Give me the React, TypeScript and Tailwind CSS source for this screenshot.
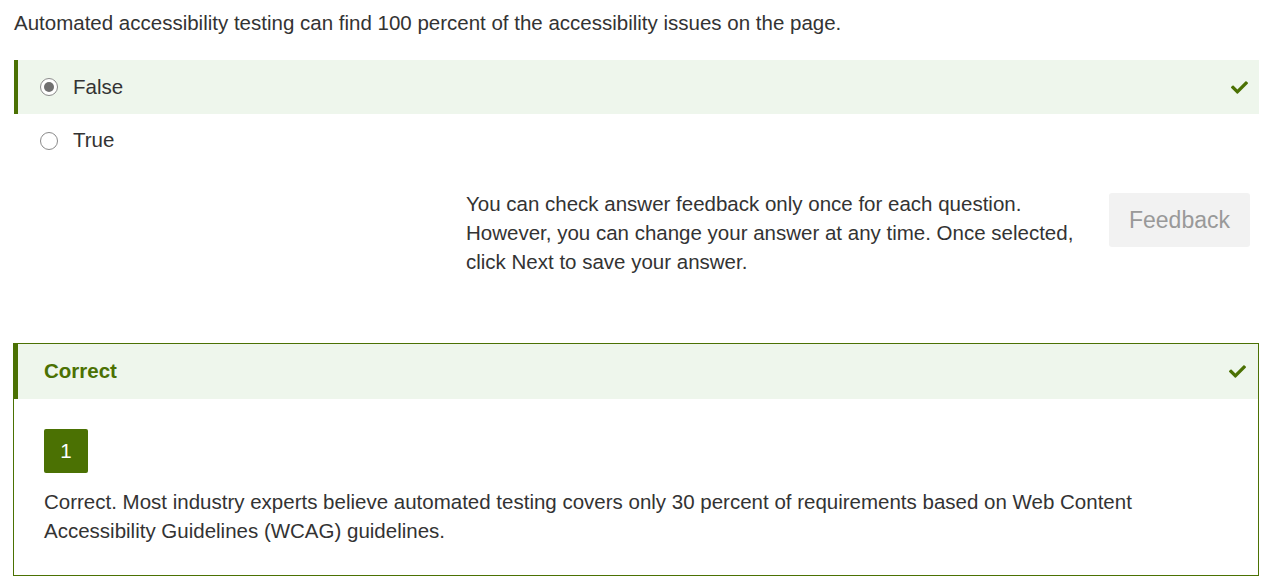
import type { ReactNode } from 'react';

const GREEN = 'text-[#4b7103]';

function Check() {
  return (
    <svg viewBox="0 0 512 512" className="h-[17px] w-[17px] fill-[#4b7103]" aria-hidden>
      <path d="M173.9 439.4l-166.4-166.4c-10-10-10-26.2 0-36.2l36.2-36.2c10-10 26.2-10 36.2 0L192 312.7 432.1 72.6c10-10 26.2-10 36.2 0l36.2 36.2c10 10 10 26.2 0 36.2l-294.4 294.4c-10 10-26.2 10-36.2 0z" />
    </svg>
  );
}

function Radio({ checked }: { checked?: boolean }) {
  return (
    <span className="flex h-[18px] w-[18px] items-center justify-center rounded-full border-[1.5px] border-[#8a8a8a] bg-white">
      {checked && <span className="h-[10px] w-[10px] rounded-full bg-[#707070]" />}
    </span>
  );
}

function Option({ label, checked, correct, children }: { label: string; checked?: boolean; correct?: boolean; children?: ReactNode }) {
  return (
    <div
      className={
        correct
          ? 'flex h-[54px] items-center border-l-4 border-[#4b7103] bg-[#eef6ec] pl-[22px] pr-[11px]'
          : 'flex h-[53px] items-center border-l-4 border-transparent pl-[22px] pr-[11px]'
      }
    >
      <Radio checked={checked} />
      <span className="ml-[15px] flex-1 text-[20.5px] text-[#333]">{label}</span>
      {children}
    </div>
  );
}

export default function App() {
  return (
    <div className="min-h-screen bg-white pl-[14px] pr-[18px] pt-[10px] font-['Liberation_Sans',Arial,sans-serif] text-[#333]">
      <p className="text-[20.5px] leading-[26px]">
        Automated accessibility testing can find 100 percent of the accessibility issues on the page.
      </p>

      <div className="mt-[24px]">
        <Option label="False" checked correct>
          <Check />
        </Option>
        <Option label="True" />
      </div>

      <div className="mt-[22px] flex items-start justify-end pr-[9px]">
        <p className="w-[622px] text-[20.5px] leading-[29px]">
          You can check answer feedback only once for each question. However, you can change your answer at any
          time. Once selected, click Next to save your answer.
        </p>
        <button className="ml-[21px] mt-[4px] h-[54px] w-[141px] rounded-[3px] bg-[#f2f2f2] text-[23px] text-[#999]">
          Feedback
        </button>
      </div>

      <section className="ml-[-1px] mt-[67px] border border-[#4b7103]">
        <div className="flex h-[55px] items-center justify-between border-l-4 border-[#4b7103] bg-[#eef6ec] pl-[26px] pr-[12px]">
          <h2 className={`text-[20.5px] font-bold ${GREEN}`}>Correct</h2>
          <Check />
        </div>
        <div className="pb-[30px] pl-[30px] pr-[26px] pt-[30px]">
          <span className="flex h-[44px] w-[44px] items-center justify-center rounded-[2px] bg-[#4b7103] text-[20.5px] text-white">
            1
          </span>
          <p className="mt-[14px] text-[20.5px] leading-[29px]">
            Correct. Most industry experts believe automated testing covers only 30 percent of requirements based on
            Web Content Accessibility Guidelines (WCAG) guidelines.
          </p>
        </div>
      </section>
    </div>
  );
}
